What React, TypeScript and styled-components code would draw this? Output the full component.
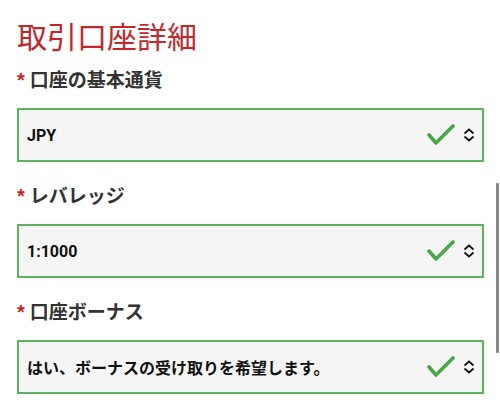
import React from "react";
import styled, { createGlobalStyle } from "styled-components";

const Global = createGlobalStyle`
  html, body { margin: 0; padding: 0; background: #fff; }
  body { font-family: "Noto Sans CJK JP", "Noto Sans", sans-serif; overflow: hidden; }
`;

const Page = styled.div`
  position: relative;
  width: 500px;
  height: 414px;
  box-sizing: border-box;
  padding: 17px 16px 0 17px;
  display: flex;
  flex-direction: column;
`;

const Title = styled.h1`
  margin: 0 0 13px 0;
  font-size: 30px;
  line-height: 36px;
  font-weight: 400;
  color: #c3272b;
  letter-spacing: 0;
`;

const Fields = styled.div`
  display: flex;
  flex-direction: column;
  gap: 20px;
`;

const Field = styled.div`
  display: flex;
  flex-direction: column;
  gap: 16px;
`;

const Label = styled.div`
  display: flex;
  align-items: center;
  gap: 5px;
  font-size: 19px;
  line-height: 26px;
  font-weight: 700;
  color: #333;
`;

const Star = styled.span`
  color: #cc1f1f;
  font-family: "Liberation Sans", sans-serif;
  font-size: 20px;
  font-weight: 700;
  position: relative;
  top: 1px;
`;

const Box = styled.div`
  height: 54px;
  box-sizing: border-box;
  border: 2px solid #5cb35c;
  background: #f5f5f5;
  display: flex;
  align-items: center;
  padding: 0 7px 0 8px;
`;

const Value = styled.div`
  flex: 1;
  font-size: 16px;
  font-weight: 700;
  color: #111;
  font-family: "Roboto", "Noto Sans CJK JP", sans-serif;
`;

const Icons = styled.div`
  display: flex;
  align-items: center;
  gap: 8px;
`;

const Scrollbar = styled.div`
  position: absolute;
  right: 1px;
  top: 183px;
  width: 3px;
  height: 170px;
  background: #8a8a8a;
  border-radius: 1px;
`;

const Check = () => (
  <svg width="28" height="22" viewBox="0 0 28 22">
    <polyline
      points="2,11 9,19 26,2"
      fill="none"
      stroke="#4aa64a"
      strokeWidth="3.6"
      strokeLinecap="round"
      strokeLinejoin="round"
    />
  </svg>
);

const Chevrons = () => (
  <svg width="12" height="14" viewBox="0 0 12 14">
    <polyline points="1.5,5.5 6,1.5 10.5,5.5" fill="none" stroke="#111" strokeWidth="1.7" />
    <polyline points="1.5,8.5 6,12.5 10.5,8.5" fill="none" stroke="#111" strokeWidth="1.7" />
  </svg>
);

const fields = [
  { label: "口座の基本通貨", value: "JPY" },
  { label: "レバレッジ", value: "1:1000" },
  { label: "口座ボーナス", value: "はい、ボーナスの受け取りを希望します。" },
];

export default function App() {
  return (
    <>
      <Global />
      <Page>
        <Title>取引口座詳細</Title>
        <Fields>
          {fields.map((f) => (
            <Field key={f.label}>
              <Label>
                <Star>*</Star>
                {f.label}
              </Label>
              <Box>
                <Value>{f.value}</Value>
                <Icons>
                  <Check />
                  <Chevrons />
                </Icons>
              </Box>
            </Field>
          ))}
        </Fields>
        <Scrollbar />
      </Page>
    </>
  );
}
